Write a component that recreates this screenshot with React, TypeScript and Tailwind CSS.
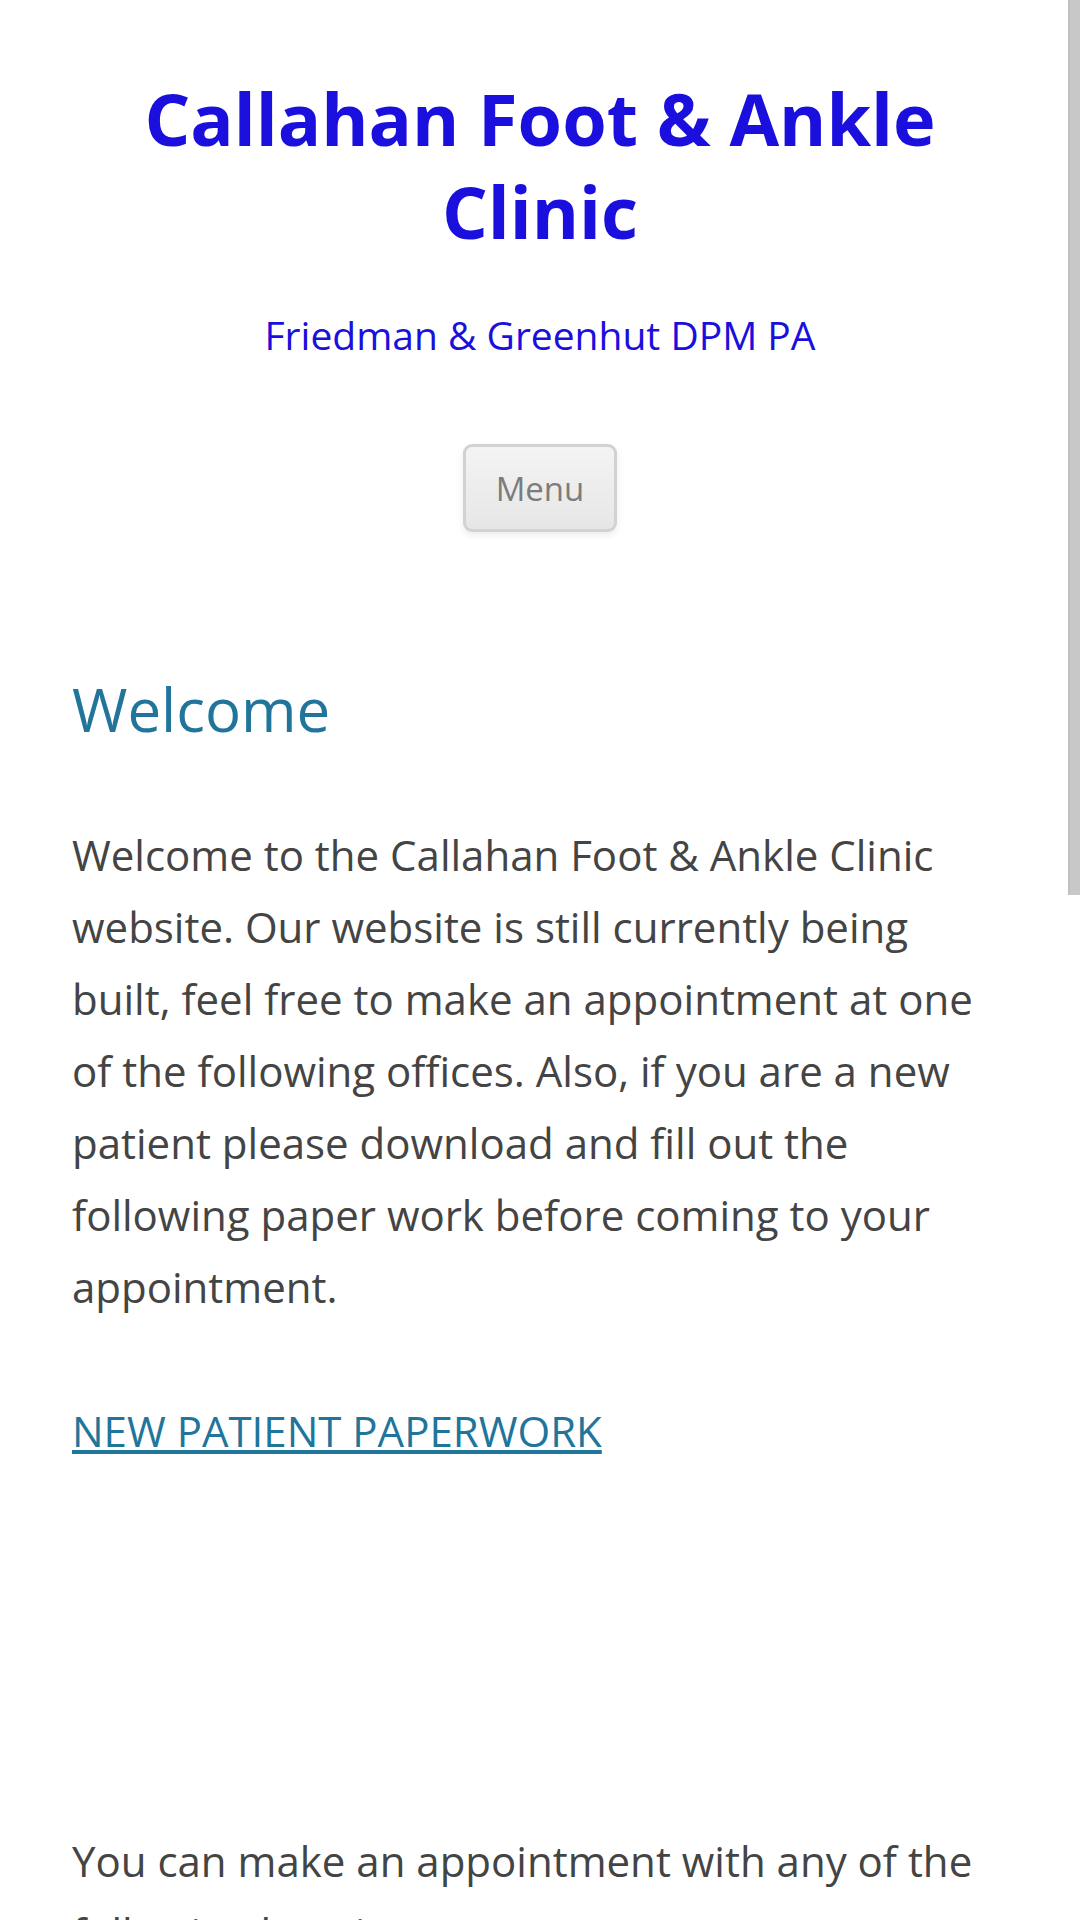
import React from "react";

export default function App() {
  return (
    <div className="relative w-full bg-white font-['Open_Sans','Noto_Sans',sans-serif]">
      <div className="px-[72px]">
        <header className="pt-[72px] pb-[69px] text-center">
          <h1 className="text-[72px] leading-[92.57px] font-bold text-[#1a0fdc]">
            Callahan Foot &amp; Ankle Clinic
          </h1>
          <h2 className="mt-[42px] text-[39px] leading-[72px] font-normal text-[#1a0fdc]">
            Friedman &amp; Greenhut DPM PA
          </h2>
          <nav className="mt-[73px] flex justify-center">
            <button className="px-[30px] pt-[19px] pb-[18px] text-[33px] leading-[45px] text-[#7c7c7c] bg-gradient-to-b from-[#f4f4f4] to-[#e6e6e6] border-[3px] border-[#d2d2d2] rounded-[9px] shadow-[0_3px_6px_rgba(64,64,64,0.1)]">
              Menu
            </button>
          </nav>
        </header>
        <main className="mt-[72px]">
          <h1 className="mb-[74px] text-[60px] leading-[72px] font-normal text-[#21759b]">
            Welcome
          </h1>
          <p className="mb-[72px] text-[42px] leading-[72px] text-[#444444]">
            Welcome to the Callahan Foot &amp; Ankle Clinic website. Our website is still currently being
            built, feel free to make an appointment at one of the following offices. Also, if you are a new
            patient please download and fill out the following paper work before coming to your appointment.
          </p>
          <p className="mb-[72px] text-[42px] leading-[72px]">
            <a href="#" className="text-[#21759b] underline">
              NEW PATIENT PAPERWORK
            </a>
          </p>
          <p className="mb-[72px] text-[42px] leading-[72px]">&nbsp;</p>
          <p className="mb-[70px] text-[42px] leading-[72px]">&nbsp;</p>
          <p className="mb-[72px] text-[42px] leading-[72px] text-[#444444]">
            You can make an appointment with any of the following locations:
          </p>
        </main>
      </div>
      <div className="absolute right-0 top-0 w-[12px] h-[895px] bg-[#c8c8c8] border-l-[2px] border-[#c0c0c0]" />
    </div>
  );
}
